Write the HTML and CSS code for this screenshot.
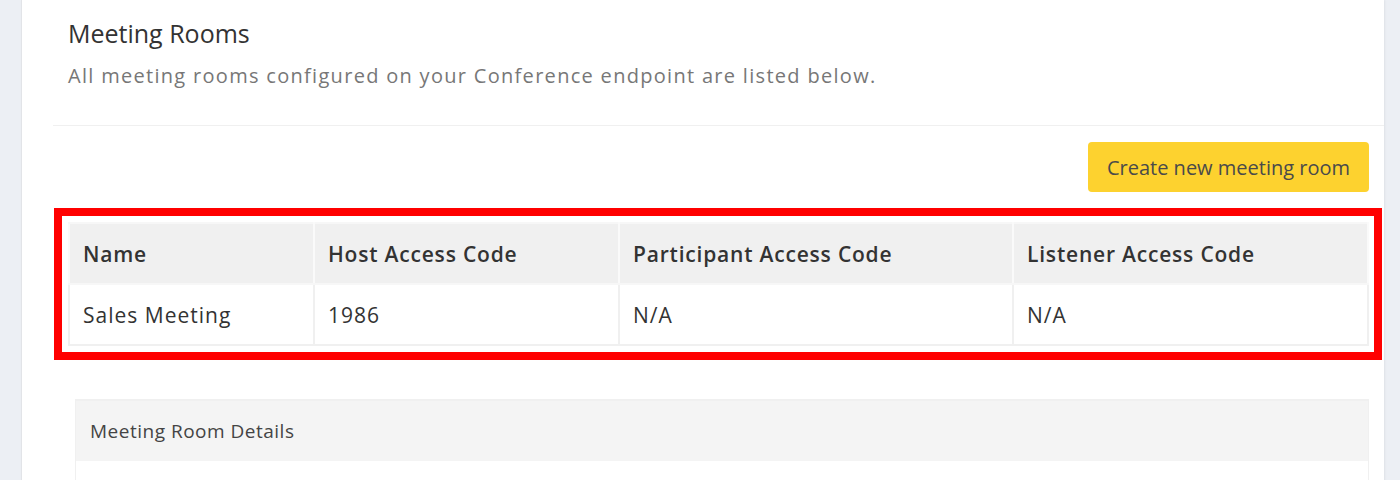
FILE: index.html
```html
<!DOCTYPE html>
<html>
<head>
<meta charset="utf-8">
<link rel="stylesheet" href="styles.css">
</head>
<body>
<div class="page">
  <div class="card">
    <div class="intro">
      <h1 class="title">Meeting Rooms</h1>
      <p class="subtitle">All meeting rooms configured on your Conference endpoint are listed below.</p>
    </div>
    <div class="actions">
      <button class="btn-create">Create new meeting room</button>
    </div>
    <div class="highlight">
      <table class="rooms">
        <thead>
          <tr>
            <th class="c1">Name</th>
            <th class="c2">Host Access Code</th>
            <th class="c3">Participant Access Code</th>
            <th class="c4">Listener Access Code</th>
          </tr>
        </thead>
        <tbody>
          <tr>
            <td>Sales Meeting</td>
            <td>1986</td>
            <td>N/A</td>
            <td>N/A</td>
          </tr>
        </tbody>
      </table>
    </div>
    <div class="details">
      <div class="details-head">Meeting Room Details</div>
      <div class="details-body"></div>
    </div>
  </div>
</div>
</body>
</html>
```

FILE: styles.css
```css
html, body {
  margin: 0;
  padding: 0;
  background: #eceff4;
  font-family: "Open Sans", "Lato", sans-serif;
  color: #333;
}
.page {
  padding: 0 16px 0 21px;
  height: 480px;
  overflow: hidden;
}
.card {
  background: #fff;
  border-left: 1px solid #e2e4e8;
  min-height: 480px;
  box-shadow: 1px 0 2px rgba(0,0,0,0.06);
}
.intro {
  margin-left: 31px;
  padding: 18px 0 36px 15px;
  border-bottom: 1px solid #f0f0f0;
}
.title {
  margin: 0;
  font-size: 25px;
  font-weight: 400;
  color: #333;
  line-height: 30px;
}
.subtitle {
  margin: 15px 0 0;
  font-size: 20px;
  letter-spacing: 1.3px;
  color: #777;
  line-height: 26px;
}
.actions {
  display: flex;
  justify-content: flex-end;
  padding: 16px 15px 0 0;
}
.btn-create {
  height: 50px;
  width: 281px;
  border: none;
  border-radius: 4px;
  background: #fdd22f;
  color: #4a4a4a;
  font-family: inherit;
  font-size: 20px;
  padding: 0;
}
.highlight {
  margin: 16px 2px 0 32px;
  border: 8px solid #ff0000;
  padding: 6px 5px 6px 6px;
}
.rooms {
  width: 100%;
  border-collapse: collapse;
  border: 1px solid #ececec;
}
.rooms th, .rooms td {
  text-align: left;
  padding: 0 13px;
  height: 59px;
  border: 2px solid #f0f0f0;
  color: #333;
}
.rooms td {
  font-size: 21px;
  letter-spacing: 1px;
}
.rooms th {
  background: #f0f0f0;
  font-size: 21px;
  letter-spacing: 0.8px;
  font-weight: 600;
  border-color: #f7f7f7 #fafafa;
}
.c1 { width: 217px; }
.c2 { width: 277px; }
.c3 { width: 366px; }
.details {
  margin: 39px 15px 0 53px;
  border: 1px solid #f0f0f0;
  border-top-width: 2px;
}
.details-head {
  background: #f4f4f4;
  height: 60px;
  line-height: 60px;
  padding-left: 14px;
  font-size: 19px;
  letter-spacing: 0.5px;
  color: #444;
}
.details-body {
  height: 40px;
}
```
